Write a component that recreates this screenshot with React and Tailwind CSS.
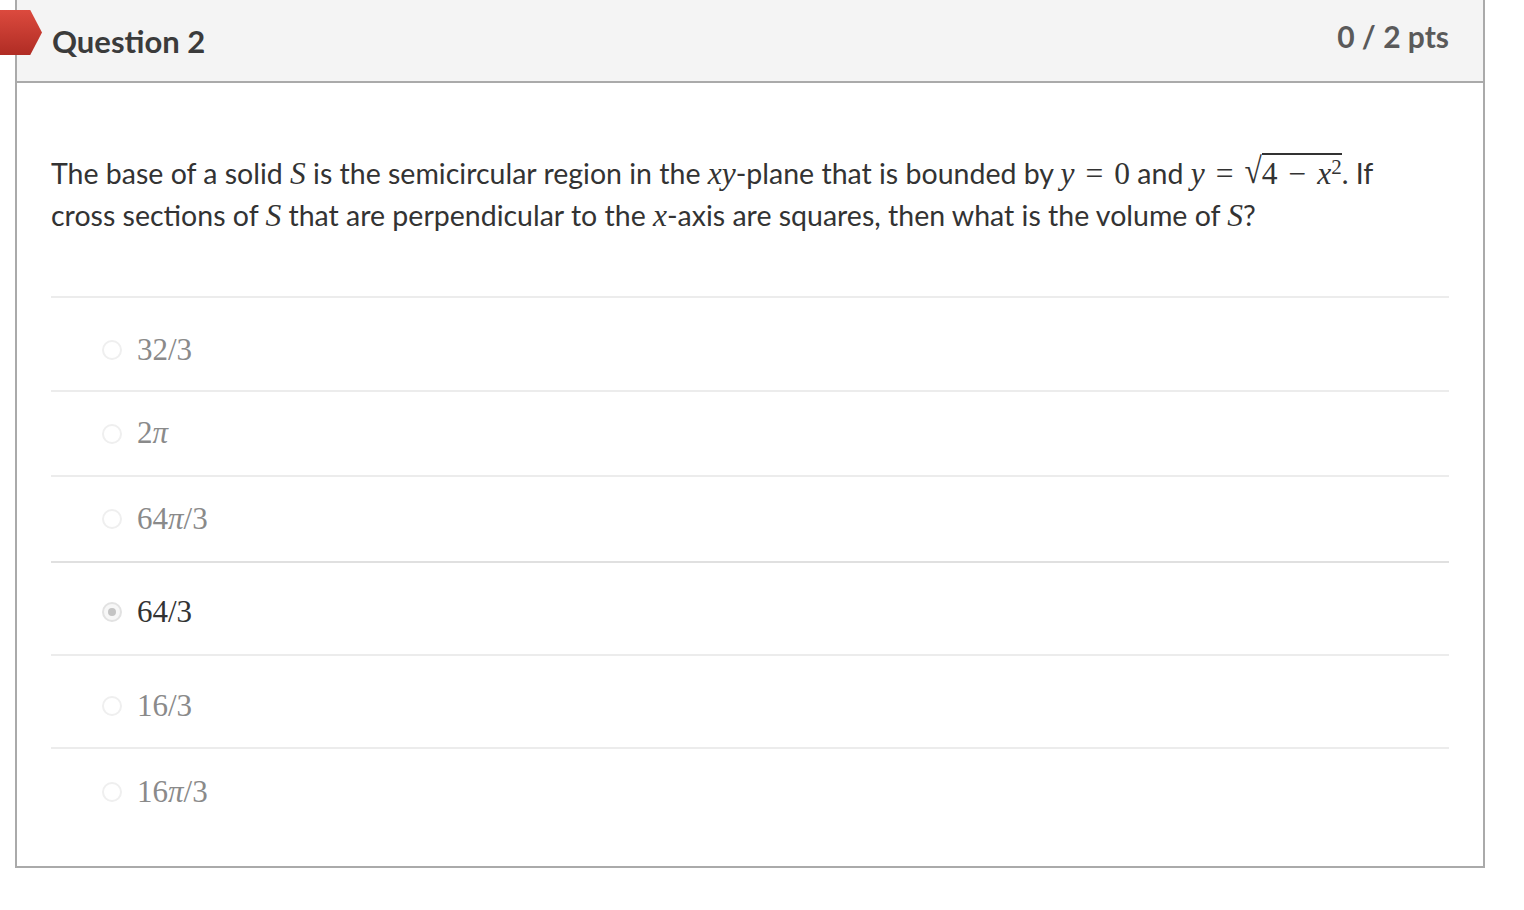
import React from "react";

const mathFont = { fontFamily: '"Liberation Serif", "DejaVu Serif", serif' };

const M = ({ children, italic = true }) => (
  <span
    className={`text-[31.5px] leading-none ${italic ? "italic" : ""}`}
    style={mathFont}
  >
    {children}
  </span>
);

const Eq = () => (
  <span className="mx-[11px] text-[31.5px] leading-none" style={mathFont}>
    =
  </span>
);

const answers = [
  { label: "32/3", h: "h-[94px]", pad: "pt-[12px]" },
  { label: "2π", h: "h-[85px]", pad: "pt-0" },
  { label: "64π/3", h: "h-[86px]", pad: "pt-0" },
  { label: "64/3", h: "h-[93px]", pad: "pt-[7px]", selected: true },
  { label: "16/3", h: "h-[93px]", pad: "pt-[9px]" },
  { label: "16π/3", h: "h-[86px]", pad: "pt-[2px]" },
];

const Radio = ({ selected }) => (
  <span
    className={`flex h-[20px] w-[20px] shrink-0 items-center justify-center rounded-full border-2 ${
      selected ? "border-[#e2e2e2] bg-[#f7f7f7]" : "border-[#efefef]"
    }`}
  >
    {selected && <span className="h-[8px] w-[8px] rounded-full bg-[#c4c4c4]" />}
  </span>
);

const AnswerText = ({ label, selected }) => {
  const parts = label.split(/(π)/);
  return (
    <span
      className={`text-[31px] ${selected ? "text-[#333]" : "text-[#8a8a8a]"}`}
      style={mathFont}
    >
      {parts.map((p, i) =>
        p === "π" ? (
          <span key={i} className="italic">
            π
          </span>
        ) : (
          <span key={i}>{p}</span>
        )
      )}
    </span>
  );
};

export default function App() {
  return (
    <div
      className="relative min-h-[910px] bg-white"
      style={{ fontFamily: 'Lato, "Open Sans", sans-serif' }}
    >
      {/* marker */}
      <div className="absolute left-0 top-[12px] z-10 h-[45px] w-[42px] bg-gradient-to-b from-[#dc4a3e] to-[#b02c24] [clip-path:polygon(0_0,72%_0,100%_50%,72%_100%,0_100%)]" />

      <div className="ml-[15px] mt-[-2px] w-[1470px] border-2 border-[#aaaaaa]">
        {/* header */}
        <div className="flex h-[83px] items-start justify-between border-b-2 border-[#aaaaaa] bg-[#f4f4f4] pl-[35px] pr-[34px]">
          <h2 className="pt-[21px] text-[31px] font-bold leading-[40px] text-[#3b3b3b]">
            Question 2
          </h2>
          <div className="pt-[16px] text-[30px] font-bold leading-[40px] text-[#5a5a5a]">
            0 / 2 pts
          </div>
        </div>

        {/* body */}
        <div className="px-[34px] pt-[69px] pb-[33px]">
          <p className="pb-[60px] pr-[20px] text-[28.5px] leading-[42px] text-[#333]">
            The base of a solid <M>S</M> is the semicircular region in the{" "}
            <M>xy</M>-plane that is bounded by <M>y</M>
            <Eq />
            <M italic={false}>0</M> and <M>y</M>
            <Eq />
            <span className="text-[31.5px] leading-none" style={mathFont}>
              <span className="inline-block origin-bottom scale-y-[1.15]">√</span>
              <span className="border-t-2 border-[#333] pt-[1px]">
                4<span className="mx-[11px]">−</span>
                <span className="italic">x</span>
                <sup className="text-[21px]">2</sup>
              </span>
            </span>
            . If cross sections of <M>S</M> that are perpendicular to the{" "}
            <M>x</M>-axis are squares, then what is the volume of <M>S</M>?
          </p>

          <div className="flex flex-col">
            {answers.map((a, i) => (
              <div
                key={i}
                className={`flex ${a.h} ${a.pad} items-center border-t-2 ${
                  i === 3 ? "border-[#e0e0e0]" : "border-[#ececec]"
                } pl-[51px]`}
              >
                <Radio selected={a.selected} />
                <span className="ml-[15px]">
                  <AnswerText label={a.label} selected={a.selected} />
                </span>
              </div>
            ))}
          </div>
        </div>
      </div>
    </div>
  );
}
